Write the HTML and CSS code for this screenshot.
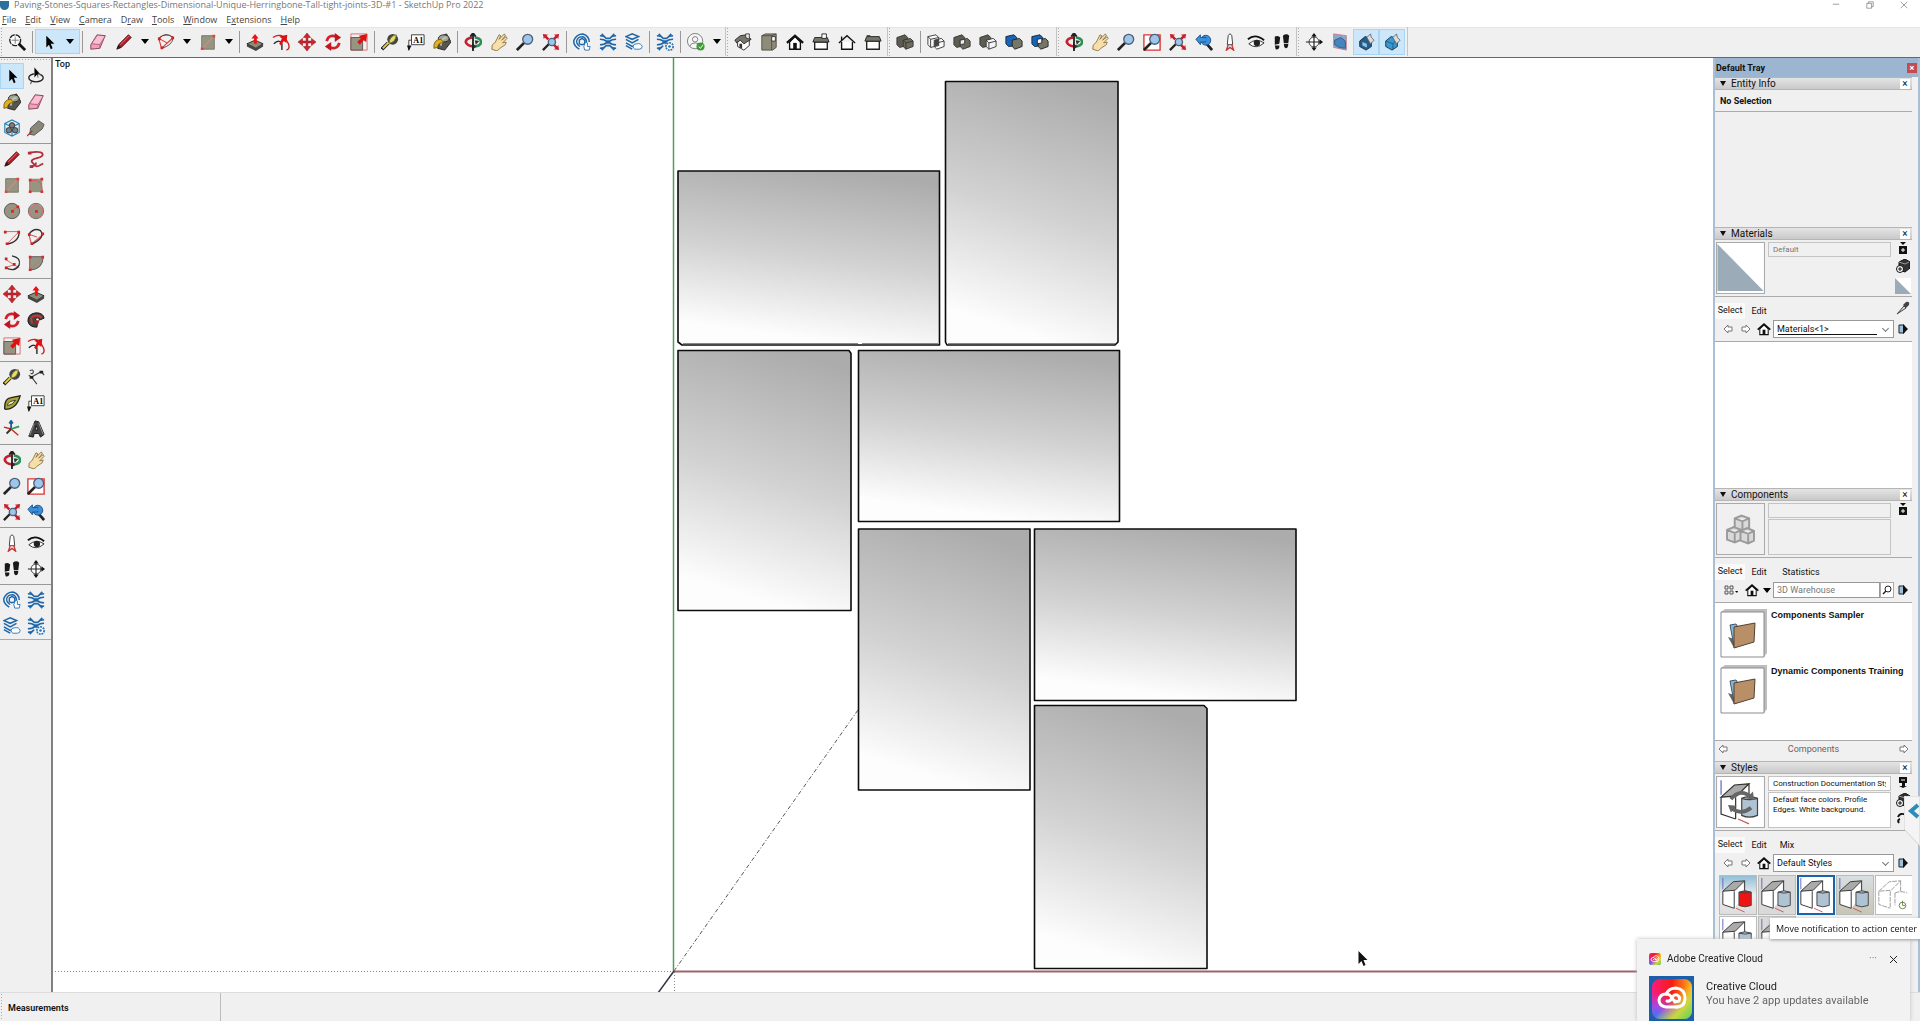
FILE: index.html
```html
<!DOCTYPE html>
<html lang="en">
<head>
<meta charset="utf-8">
<title>Paving-Stones - SketchUp Pro 2022</title>
<link rel="stylesheet" href="styles.css">
</head>
<body>
<svg class="sprite" aria-hidden="true">
  <defs>
    <linearGradient id="stone" x1="0.62" y1="0" x2="0.42" y2="1"><stop offset="0" stop-color="#acacac"/><stop offset="0.5" stop-color="#d2d2d2"/><stop offset="0.95" stop-color="#fdfdfd"/></linearGradient>
    <linearGradient id="ccH" x1="0" y1="0" x2="1" y2="0"><stop offset="0" stop-color="#f81b7c"/><stop offset="0.5" stop-color="#f71d12"/><stop offset="1" stop-color="#ffb21c"/></linearGradient>
    <linearGradient id="ccV" x1="0.5" y1="0" x2="0.2" y2="1"><stop offset="0.4" stop-color="#c83bd0" stop-opacity="0"/><stop offset="0.75" stop-color="#a04be8"/><stop offset="1" stop-color="#2e7df0"/></linearGradient>
    <linearGradient id="ccG" x1="0" y1="0" x2="1" y2="1"><stop offset="0.5" stop-color="#e8e040" stop-opacity="0"/><stop offset="0.75" stop-color="#c8d840"/><stop offset="1" stop-color="#5ad05c"/></linearGradient>
  </defs>
  <symbol id="search" viewBox="0 0 20 20"><circle cx="8" cy="8" r="6" fill="#fff" stroke="#222" stroke-width="1.5" stroke-dasharray="6 1"/><path d="M8 4v8M4 8h8" stroke="#777"/><path d="M12 12l7 7" stroke="#111" stroke-width="3"/></symbol>
  <symbol id="cursor" viewBox="0 0 20 20"><path d="M7 3v13l3-3 2 5 2-1-2-5h4z" fill="#000"/></symbol>
  <symbol id="lasso" viewBox="0 0 20 20"><ellipse cx="10" cy="12" rx="8" ry="4.500" fill="none" stroke="#222" stroke-width="1.500"/><path d="M5 16l-1 3" stroke="#222"/><path d="M8 0v12l3-3 1 3h1l-1-4h3z" fill="#000" stroke="#f0f0f0" stroke-width=".5"/></symbol>
  <symbol id="eraser" viewBox="0 0 20 20"><path d="M9 2l9 1-6 14-10 1v-5z" fill="#f0a0b8" stroke="#7a3c50"/><path d="M9 2L3 12l9 1 6-10M12 13v4" fill="none" stroke="#b86080"/><path d="M10 3l7 1-5 8-8-1z" fill="#f8c0d0"/></symbol>
  <symbol id="pencil" viewBox="0 0 20 20"><path d="M2 18l2-5L15 2l3 3L7 16z" fill="#b81c28" stroke="#4c1014"/><path d="M2 18l2-5 3 3z" fill="#222"/><path d="M6 13L16 3" stroke="#e67"/></symbol>
  <symbol id="arc" viewBox="0 0 20 20"><path d="M5 17L2 6Q9-1 18 5L5 17M2 6l9 5" fill="none" stroke="#d33" stroke-width="1.200"/><path d="M2 6Q10-2 18 5 17 14 5 17" fill="none" stroke="#444"/><path d="M1 5h3v3H1zM16 4h3v3h-3zM4 15h3v3H4z" fill="#c22"/></symbol>
  <symbol id="rect" viewBox="0 0 20 20"><path d="M3 3h14v15H3z" fill="#989482" stroke="#77745f"/><path d="M3 18L17 3" stroke="#e88"/><path d="M2 16h3v3H2zM15 2h3v3h-3z" fill="#d44"/></symbol>
  <symbol id="rrect" viewBox="0 0 20 20"><path d="M3 3h14v15H3z" fill="#989482"/><path d="M3 18V5h8q6 2 6 13" fill="none" stroke="#d55"/><path d="M2 3h3v3H2zM2 16h3v3H2zM15 16h3v3h-3zM15 2h3v3h-3z" fill="#c33"/></symbol>
  <symbol id="circle" viewBox="0 0 20 20"><circle cx="10" cy="10" r="8.500" fill="#989482" stroke="#555"/><path d="M10 10l6-5" stroke="#d55"/><path d="M9 9h3v3H9zM15 4h3v3h-3z" fill="#d22"/></symbol>
  <symbol id="poly" viewBox="0 0 20 20"><circle cx="10" cy="10" r="8.500" fill="#b4aa9c" stroke="#666"/><path d="M10 2l8 6-3 9H5L2 8z" fill="#989482" stroke="#d66"/><path d="M9 9h3v3H9z" fill="#d22"/></symbol>
  <symbol id="arc2" viewBox="0 0 20 20"><path d="M2 4h16L4 18" fill="none" stroke="#d55"/><path d="M18 4q0 12-14 14" fill="none" stroke="#333" stroke-width="1.500"/><path d="M1 3h3v3H1zM16 3h3v3h-3zM3 16h3v3H3z" fill="#c22"/></symbol>
  <symbol id="arc3" viewBox="0 0 20 20"><path d="M5 18L2 7l9 3M5 18L18 7" fill="none" stroke="#d55" stroke-width="1.300"/><path d="M2 7Q8-1 15 3q6 8-10 15" fill="none" stroke="#333" stroke-width="1.500"/><path d="M1 6h3v3H1zM16 5h3v3h-3zM4 16h3v3H4z" fill="#c22"/></symbol>
  <symbol id="arc4" viewBox="0 0 20 20"><path d="M3 6l9 6 6 3M12 12l-9 3" fill="none" stroke="#d55"/><path d="M10 2q10 2 8 10-5 9-15 3" fill="none" stroke="#333" stroke-width="1.500"/><path d="M2 4h3v3H2zM11 10h3v3h-3zM2 14h3v3H2z" fill="#c22"/></symbol>
  <symbol id="pie" viewBox="0 0 20 20"><path d="M3 3h15q0 14-15 15z" fill="#989482" stroke="#555"/><path d="M3 18L17 4M3 3v15" stroke="#d66"/><path d="M2 2h3v3H2zM2 16h3v3H2zM16 2h3v3h-3z" fill="#c33"/></symbol>
  <symbol id="free" viewBox="0 0 20 20"><path d="M3 3q12-2 14 1t-6 5-5 5 4 4 8-3" fill="none" stroke="#b22e38" stroke-width="2"/><path d="M1 2h4v3H1zM3 17h4v3H3z" fill="#b22e38"/><path d="M5 18q5 0 5-4" fill="none" stroke="#b22e38" stroke-width="2"/></symbol>
  <symbol id="push" viewBox="0 0 20 20"><path d="M1 12l9-4 9 4-8 5z" fill="#8c8a74" stroke="#222"/><path d="M1 12v3l10 5 8-5v-3l-8 5z" fill="#444"/><path d="M10 1l4 5h-2v6H9V6H6z" fill="#e11"/></symbol>
  <symbol id="offset" viewBox="0 0 20 20"><path d="M1 5q9-6 15 3t0 11" fill="none" stroke="#c22" stroke-width="1.500"/><path d="M2 12q6-6 9 0v7" fill="none" stroke="#222" stroke-width="1.500"/><path d="M8 12l3-6-3-2 9-2-1 9-3-2-3 5z" fill="#d11"/></symbol>
  <symbol id="move" viewBox="0 0 20 20"><path d="M10 0l4 5h-3v4h4V6l5 4-5 4v-3h-4v4h3l-4 5-4-5h3v-4H5v3l-5-4 5-4v3h4V5H6z" fill="#d2222c" stroke="#8e1720" stroke-width=".6"/></symbol>
  <symbol id="rotate" viewBox="0 0 20 20"><path d="M3 9q2-8 11-5M17 11q-2 8-11 5" fill="none" stroke="#d2222c" stroke-width="3"/><path d="M12 0l7 5-7 5zM8 10l-7 5 7 5z" fill="#c01620"/></symbol>
  <symbol id="scale" viewBox="0 0 20 20"><path d="M1 1h18v18H1z" fill="none" stroke="#d66"/><path d="M1 5h13v14H1z" fill="#989482" stroke="#555"/><path d="M8 10l4-4-2-3 9-2-1 9-3-2-4 5z" fill="#d11"/></symbol>
  <symbol id="follow" viewBox="0 0 20 20"><path d="M1 11q0-8 9-9 8 0 9 6l-5 2q-1-4-4-2-2 2 2 4l-1 6Q2 18 1 11" fill="#444" stroke="#111"/><path d="M6 14Q2 6 10 5q5 0 6 3" fill="none" stroke="#c33" stroke-width="2"/><path d="M8 11l6-1-2 6z" fill="#a22"/></symbol>
  <symbol id="tape" viewBox="0 0 20 20"><path d="M1 18l7-7" stroke="#222" stroke-width="4"/><path d="M2 17l7-7" stroke="#e0d040" stroke-width="2"/><circle cx="13" cy="7" r="6" fill="#444"/><path d="M9 11q1-8 8-9-1 9-8 9" fill="#e6e05c" stroke="#774"/></symbol>
  <symbol id="text" viewBox="0 0 20 20"><path d="M5 2h14v11H5zM2 19V8h3" fill="#fff" stroke="#333"/><path d="M0 14h5l-3 6z" fill="#111"/><text x="7" y="11" font-family="Liberation Serif,serif" font-size="9" font-weight="bold">A1</text></symbol>
  <symbol id="paint" viewBox="0 0 20 20"><path d="M7 5l8-4 5 9-7 9-8-2z" fill="#55574d" stroke="#222"/><ellipse cx="12" cy="6" rx="6" ry="4" fill="#a1a392" stroke="#222"/><path d="M9 14q-1-8 6-9" fill="none" stroke="#bfc1b4" stroke-width="2"/><path d="M1 17Q0 7 9 7l3 4q-6-1-7 5z" fill="#e0b020" stroke="#765b10"/></symbol>
  <symbol id="orbit" viewBox="0 0 20 20"><path d="M12 5q7 1 7 5t-7 5" fill="none" stroke="#2c8f55" stroke-width="3"/><path d="M9 5q-7 1-7 5 1 4 8 5" fill="none" stroke="#c32030" stroke-width="3"/><path d="M9 11l5 4-5 4zM12 8l5 1-4 4z" fill="#333"/><path d="M10 1v19M7 4l3-4 3 4" fill="none" stroke="#222" stroke-width="2"/></symbol>
  <symbol id="hand" viewBox="0 0 20 20"><path d="M2 18q-1-5 4-8l4-8 2 1-2 4 6-6 1 2-4 5 5-4 1 2-5 5 4-1-1 3-6 4-3 3z" fill="#f6dfa8" stroke="#8b7345"/></symbol>
  <symbol id="zoom" viewBox="0 0 20 20"><path d="M1 19l8-8" stroke="#222" stroke-width="3"/><circle cx="13" cy="7" r="5.500" fill="#9fc6ea" stroke="#4a6078" stroke-width="1.500"/></symbol>
  <symbol id="zoomwin" viewBox="0 0 20 20"><path d="M1 2h18v17H1z" fill="#fff" stroke="#d33" stroke-width="1.500"/><path d="M1 19l8-8" stroke="#222" stroke-width="3"/><circle cx="13" cy="7" r="5.500" fill="#9fc6ea" stroke="#4a6078" stroke-width="1.500"/></symbol>
  <symbol id="zoomext" viewBox="0 0 20 20"><path d="M1 1l6 1-2 1 3 3-2 2-3-3-1 2zM19 1l-1 6-1-2-3 3-2-2 3-3-2-1zM19 19l-6-1 2-1-3-3 2-2 3 3 1-2z" fill="#c81c28"/><path d="M1 19l7-7" stroke="#222" stroke-width="2.500"/><circle cx="11" cy="10" r="4" fill="#9fc6ea" stroke="#4a6078" stroke-width="1.500"/></symbol>
  <symbol id="zoomprev" viewBox="0 0 20 20"><path d="M12 11l7 8" stroke="#222" stroke-width="3"/><circle cx="12" cy="8" r="5.500" fill="#3b8fd8" stroke="#1c4f85"/><path d="M1 7l5-5v3h6v5H6v3z" fill="#3b8fd8" stroke="#1c4f85"/><path d="M6 6h7v3H6z" fill="#3b8fd8"/></symbol>
  <symbol id="ware" viewBox="0 0 20 20"><path d="M7 18Q0 14 1 8 4 1 11 1q7 2 7 9" fill="none" stroke="#1e66a8" stroke-width="1.700"/><path d="M8 15q-4-2-4-6 1-5 7-5 4 2 4 6M7 12V8l3-2 3 2v4l-3 1z" fill="none" stroke="#1e66a8" stroke-width="1.500"/><path d="M12 15l2-5 2 1v4h3l-1 4h-5z" fill="#fff" stroke="#2874b5"/></symbol>
  <symbol id="exten" viewBox="0 0 20 20"><path d="M1 3q5 0 7 3h4q2-3 7-3M1 7q5 0 7 2h4q2-2 7-2M1 17q5 0 7-3h4q2 3 7 3M1 13q5 0 7-2h4q2 2 7 2M3 1l4 4M17 1l-4 4M3 19l4-4M17 19l-4-4" fill="none" stroke="#1e66a8" stroke-width="1.800"/></symbol>
  <symbol id="layers" viewBox="0 0 20 20"><path d="M1 4l7-3 7 3-7 3zM1 7l7 4 7-4M1 11l7 4 3-1M1 14l7 4" fill="none" stroke="#1e66a8" stroke-width="1.700"/><path d="M9 15q0-3 4-3 5-1 6 3 0 3-3 3h-5q-2-1-2-3" fill="#fff" stroke="#2874b5"/></symbol>
  <symbol id="extgear" viewBox="0 0 20 20"><path d="M1 3q5 0 7 3h4q2-3 7-3M1 7q5 0 7 2h4q2-2 7-2M1 17q5 0 7-3M1 13q5 0 7-2h4M3 1l4 4M17 1l-4 4M3 19l4-4" fill="none" stroke="#1e66a8" stroke-width="1.800"/><circle cx="15" cy="15" r="4" fill="#fff" stroke="#2874b5" stroke-dasharray="2 1" stroke-width="2"/><circle cx="15" cy="15" r="1.500" fill="#2874b5"/></symbol>
  <symbol id="user" viewBox="0 0 20 20"><circle cx="9" cy="9" r="8.500" fill="#f6f6f6" stroke="#777"/><circle cx="9" cy="7" r="3" fill="none" stroke="#777"/><path d="M3 15q1-4 6-4t6 4" fill="none" stroke="#777"/><circle cx="15" cy="15" r="4.500" fill="#3c9b35"/><path d="M13 15l2 2 3-4" fill="none" stroke="#fff"/></symbol>
  <symbol id="iso" viewBox="0 0 20 20"><path d="M4 9v6l7 4 6-5V7" fill="#fff" stroke="#222"/><path d="M1 8l6-5 7-1 5 5-8 5-4-4-4 3z" fill="#77756a" stroke="#222"/><path d="M13 1h4v6l-4-2z" fill="#eee" stroke="#333"/><path d="M6 12h3v5l-3-1z" fill="#333"/></symbol>
  <symbol id="top" viewBox="0 0 20 20"><path d="M2 3l4-2h12v15l-4 3H2z" fill="#8e8b7a" stroke="#4f4d42"/><path d="M2 3h11v16M13 3l5-2" fill="none" stroke="#4f4d42"/><path d="M13 4h4v5h-4z" fill="#fff" stroke="#333"/></symbol>
  <symbol id="home" viewBox="0 0 20 20"><path d="M4 10v8h12v-8l-6-6z" fill="#fff" stroke="#111" stroke-width="1.500"/><path d="M1 11l9-8 9 8" fill="none" stroke="#111" stroke-width="2.500"/><path d="M8 11h4v7H8z" fill="#111"/></symbol>
  <symbol id="right" viewBox="0 0 20 20"><path d="M3 10h14v8H3z" fill="#fff" stroke="#222" stroke-width="1.500"/><path d="M3 5h14l2 5H1z" fill="#77756a" stroke="#222"/><path d="M11 1h5v5h-5z" fill="#fff" stroke="#222"/></symbol>
  <symbol id="back" viewBox="0 0 20 20"><path d="M4 10v8h12v-8" fill="#fff" stroke="#111" stroke-width="1.500"/><path d="M1 11l9-8 9 8M4 8V4" fill="none" stroke="#111" stroke-width="1.500"/></symbol>
  <symbol id="left" viewBox="0 0 20 20"><path d="M3 9h14v9H3z" fill="#fff" stroke="#222" stroke-width="1.500"/><path d="M3 4h14l2 5H1zM3 3h4" fill="#77756a" stroke="#222"/></symbol>
  <symbol id="solid" viewBox="0 0 20 20"><path d="M1 5l9-3 3 3v9l-9 2-3-3z" fill="#5d5c52" stroke="#333"/><path d="M8 8l8-2 3 3v6l-8 3-3-3z" fill="#6d6b5e" stroke="#333"/><path d="M8 8l3 3 8-2M11 11v7" fill="none" stroke="#333"/></symbol>
  <symbol id="inter" viewBox="0 0 20 20"><path d="M1 4l9-2 3 3v9l-9 2-3-3zM1 4l3 3v9M8 8l8-2 3 3v6l-8 3-3-3zM11 11l8-2M4 7l9-2" fill="#fff" fill-opacity=".6" stroke="#333"/><path d="M8 8l5-1v7l-5 1z" fill="#444"/></symbol>
  <symbol id="union" viewBox="0 0 20 20"><path d="M1 5l9-3 3 3v9l-9 2-3-3z" fill="#5d5c52" stroke="#333"/><path d="M8 8l8-2 3 3v6l-8 3-3-3z" fill="#6d6b5e" stroke="#333"/><path d="M8 8l5-1v5l-5 1z" fill="#eee" stroke="#333"/></symbol>
  <symbol id="subtr" viewBox="0 0 20 20"><path d="M1 5l9-3 3 3v9l-9 2-3-3z" fill="#5d5c52" stroke="#333"/><path d="M8 8l8-2 3 3v6l-8 3-3-3z" fill="#f4f4f4" stroke="#333"/><path d="M8 8l3 3 8-2M11 11v7" fill="none" stroke="#333"/></symbol>
  <symbol id="trim" viewBox="0 0 20 20"><path d="M1 4l9-2 3 3v9l-9 1-3-3z" fill="#1b63b5" stroke="#123"/><path d="M8 8l8-2 3 3v6l-8 3-3-3z" fill="#77756a" stroke="#222"/></symbol>
  <symbol id="cleave" viewBox="0 0 20 20"><path d="M1 4l9-2 3 3v9l-9 1-3-3z" fill="#1b63b5" stroke="#123"/><path d="M8 8l8-2 3 3v6l-8 3-3-3z" fill="#77756a" stroke="#222"/><path d="M7 7l5-1v5l-5 1z" fill="#fff" stroke="#123"/></symbol>
  <symbol id="pos" viewBox="0 0 20 20"><path d="M8 3q2-4 4 0l1 10H7z" fill="#fff" stroke="#333"/><path d="M8 13l-2 6 4-3 4 3-2-6" fill="none" stroke="#c33" stroke-width="1.500"/></symbol>
  <symbol id="eye" viewBox="0 0 20 20"><path d="M1 7q8-7 18 1" fill="none" stroke="#111" stroke-width="2"/><path d="M2 12q8-7 17-1-9 8-17 1" fill="#fff" stroke="#222"/><circle cx="11" cy="11" r="3.500" fill="#222"/></symbol>
  <symbol id="walk" viewBox="0 0 20 20"><path d="M2 4q4-2 6 1l-1 7-5 1zM2 14h5v2q-1 3-4 2zM11 3q4-3 7 0l-1 8h-5zM12 12h5q0 5-3 5-2-1-2-5" fill="#181818"/></symbol>
  <symbol id="section" viewBox="0 0 20 20"><circle cx="10" cy="10" r="5.500" fill="#fff" stroke="#333"/><path d="M1 10h18M10 3v14" fill="none" stroke="#222" stroke-width="1.300"/><path d="M7 4l3-4 3 4zM7 16l3 4 3-4zM16 7l4 3-4 3z" fill="#111"/></symbol>
  <symbol id="plane" viewBox="0 0 20 20"><path d="M3 1l14 2v16L3 16z" fill="#87a8cf" stroke="#c67a88"/><path d="M4 8l7-3 5 4v8l-7-1-5-3z" fill="#4684bd" stroke="#345d87"/></symbol>
  <symbol id="cut" viewBox="0 0 20 20"><path d="M3 9l6-5 7 2v9l-6 4-7-4z" fill="#275b88" stroke="#183247"/><path d="M6 10l5 2v4l-5-2z" fill="#8cc4e4"/><path d="M11 5l4-4 1 4 3 3-4 4z" fill="#ddd" stroke="#666"/></symbol>
  <symbol id="fill" viewBox="0 0 20 20"><path d="M3 9l6-5 7 2v9l-6 4-7-4z" fill="#3a98d0" stroke="#183247"/><path d="M3 9l8 3 4-4M11 12v7" fill="none" stroke="#1c5c85"/><path d="M11 5l4-4 1 4 3 3-4 4z" fill="#ddd" stroke="#666"/></symbol>
  <symbol id="group" viewBox="0 0 20 20"><path d="M2 5l8-4 8 4v10l-8 4-8-4zM2 5l8 4 8-4M10 9v10" fill="none" stroke="#2781b8" stroke-width="1.300"/><g fill="#777d81" stroke="#333"><circle cx="10" cy="7" r="3"/><circle cx="6.500" cy="12.500" r="3"/><circle cx="13.500" cy="12.500" r="3"/></g></symbol>
  <symbol id="tag" viewBox="0 0 20 20"><path d="M3 17l1-7 9-8 6 4-2 5-9 7z" fill="#8b8878" stroke="#555"/><path d="M0 19l6-6" stroke="#a33" stroke-width="1.500"/></symbol>
  <symbol id="dim" viewBox="0 0 20 20"><path d="M3 3q4-2 4 1T4 6M5 10l11-6M5 10l6 8M16 4l3 4M2 8l3 2" fill="none" stroke="#444" stroke-width="1.300"/><path d="M3 9h4v3H3zM14 3h4v3h-4z" fill="#222"/></symbol>
  <symbol id="prot" viewBox="0 0 20 20"><path d="M2 17Q1 5 9 4l10-2q-4 15-17 15" fill="#a8a438" stroke="#222" stroke-width="1.500"/><path d="M5 13q0-5 9-6-3 5-9 6" fill="#f3f0c0" stroke="#333"/></symbol>
  <symbol id="axes" viewBox="0 0 20 20"><path d="M9 10V1M7 4l2-3 2 3" fill="none" stroke="#1d5c96" stroke-width="2"/><path d="M9 10l8 7M1 8l8 2" stroke="#c22" stroke-width="1.500"/><path d="M9 10l9-3" stroke="#2a9a50" stroke-width="2"/><path d="M4 15l5-5" stroke="#333" stroke-width="2"/></symbol>
  <symbol id="text3d" viewBox="0 0 20 20"><path d="M2 18L9 1l4 1 6 14-4 3-2-4H8l-1 4zM9 11h3l-2-5z" fill="#444" stroke="#111"/><path d="M13 3l5 13M3 17l5-13" stroke="#999"/></symbol>
  <symbol id="prev" viewBox="0 0 10 10"><path d="M1 5l4-4v2h4v4H5v2z" fill="#fff" stroke="#777"/></symbol>
  <symbol id="next" viewBox="0 0 10 10"><path d="M9 5L5 1v2H1v4h4v2z" fill="#fff" stroke="#777"/></symbol>
  <symbol id="detail" viewBox="0 0 10 10"><path d="M1 1h5v8H1z" fill="#9cc0dc" stroke="#222"/><path d="M5 0l5 5-5 5z" fill="#111"/></symbol>
  <symbol id="pane" viewBox="0 0 10 12"><path d="M2 0h6L5 3zM1 4h8v8H1z" fill="#111"/><path d="M5 6v4M3 8h4" stroke="#fff"/></symbol>
  <symbol id="block" viewBox="0 0 14 14"><path d="M3 3l6-3 5 3v6l-5 4-6-2z" fill="#333" stroke="#111"/><path d="M3 3l6 2 4-2" fill="none" stroke="#999"/><circle cx="4" cy="10" r="3.500" fill="#fff" stroke="#111"/><path d="M4 8v4M2 10h4" stroke="#111"/></symbol>
  <symbol id="dropper" viewBox="0 0 14 14"><path d="M1 13l7-8 2 2z" fill="#ddd" stroke="#444"/><path d="M7 4l3-3q4-1 3 3l-3 3z" fill="#444"/></symbol>
  <symbol id="lens" viewBox="0 0 10 10"><circle cx="6" cy="4" r="3" fill="none" stroke="#222"/><path d="M4 6L1 9" stroke="#222" stroke-width="1.500"/></symbol>
  <symbol id="folder" viewBox="0 0 48 50"><path d="M1 4l4-3h42v44l-3 4z" fill="#bdbdbd"/><path d="M1 4h43v45H1z" fill="#fff" stroke="#8b8b8b"/><path d="M8 29l6 2v9z" fill="#666"/><path d="M10 17l6-1 2 3h8v12l-12 7z" fill="#83b8d4" stroke="#456"/><path d="M14 19l21-4-1 19-20 6z" fill="#b98f68" stroke="#4f4235"/></symbol>
  <symbol id="cubes" viewBox="0 0 48 52"><g fill="#d9d9d9" stroke="#9a9a9a" stroke-width="2"><path d="M18 15l7-3 8 3v10l-7 3-8-3zM18 15l8 3 7-3M26 18v10"/><path d="M10 27l7-3 8 3v10l-7 3-8-3zM10 27l8 3 7-3M18 30v10"/><path d="M24 28l7-3 7 3v10l-6 3-8-3zM24 28l8 3 6-3M32 31v10"/></g></symbol>
  <symbol id="model" viewBox="0 0 38 38"><path d="M3 15L14 5l11-1v18L15 33 3 29z" fill="#fff"/><path d="M3 15L14 5l12-1-10 10z" fill="#aaa"/><path d="M3 15L14 5l12-1-10 10zM3 15v14l12 4M15 15v18M26 4v12" fill="none" stroke="#333"/><path d="M20 16q6-3 13 0v14q-7 3-13 0z" fill="currentColor" stroke="#444"/><path d="M20 16q6 2 13 0" fill="none" stroke="#444"/><path d="M3 1v12" stroke="#66b"/><path d="M17 33l9 4" stroke="#c55"/></symbol>
  <symbol id="cc" viewBox="0 0 40 40"><rect width="40" height="40" rx="8" fill="url(#ccH)"/><rect width="40" height="40" rx="8" fill="url(#ccV)"/><rect width="40" height="40" rx="8" fill="url(#ccG)"/><g fill="none" stroke="#fff" stroke-width="3" stroke-linecap="round"><path d="M26 28H14q-7-1-7-7 1-6 7-6 4 0 6 4l3 4"/><path d="M14 15q3-6 10-6 9 1 9 10t-9 9"/><path d="M15 22q3 1 5-3 2-4 5-3 4 2 2 6-2 1-4 0"/></g></symbol>
</svg>

<header class="titlebar">
  <span class="app-dot"></span>
  <h1 class="title">Paving-Stones-Squares-Rectangles-Dimensional-Unique-Herringbone-Tall-tight-joints-3D-#1 - SketchUp Pro 2022</h1>
  <div class="window-buttons">
    <button aria-label="Minimize"><svg viewBox="0 0 10 10"><path d="M1 4h8" stroke="#888"/></svg></button>
    <button aria-label="Restore"><svg viewBox="0 0 10 10"><path d="M1 3h6v6H1zM3 3V1h6v6H7" fill="none" stroke="#888"/></svg></button>
    <button aria-label="Close"><svg viewBox="0 0 10 10"><path d="M1 1l8 8M9 1L1 9" stroke="#888"/></svg></button>
  </div>
</header>
<nav class="menubar">
  <button><u>F</u>ile</button><button><u>E</u>dit</button><button><u>V</u>iew</button><button><u>C</u>amera</button><button>D<u>r</u>aw</button><button><u>T</u>ools</button><button><u>W</u>indow</button><button>E<u>x</u>tensions</button><button><u>H</u>elp</button>
</nav>
<div class="toolbars">
  <div class="toolbar">
    <button class="tool" aria-label="Search"><svg><use href="#search"/></svg></button><i class="sep"></i>
    <span class="split"><button class="tool" aria-label="Select"><svg><use href="#cursor"/></svg></button><button class="drop" aria-label="Select tools"></button></span><i class="sep"></i>
    <button class="tool" aria-label="Eraser"><svg><use href="#eraser"/></svg></button>
    <button class="tool" aria-label="Line"><svg><use href="#pencil"/></svg></button><button class="drop" aria-label="Line tools"></button>
    <button class="tool" aria-label="Arc"><svg><use href="#arc"/></svg></button><button class="drop" aria-label="Arc tools"></button>
    <button class="tool" aria-label="Rectangle"><svg><use href="#rect"/></svg></button><button class="drop" aria-label="Shape tools"></button><i class="sep"></i>
    <button class="tool" aria-label="Push/Pull"><svg><use href="#push"/></svg></button>
    <button class="tool" aria-label="Offset"><svg><use href="#offset"/></svg></button>
    <button class="tool" aria-label="Move"><svg><use href="#move"/></svg></button>
    <button class="tool" aria-label="Rotate"><svg><use href="#rotate"/></svg></button>
    <button class="tool" aria-label="Scale"><svg><use href="#scale"/></svg></button><i class="sep"></i>
    <button class="tool" aria-label="Tape Measure"><svg><use href="#tape"/></svg></button>
    <button class="tool" aria-label="Text"><svg><use href="#text"/></svg></button>
    <button class="tool" aria-label="Paint Bucket"><svg><use href="#paint"/></svg></button><i class="sep"></i>
    <button class="tool" aria-label="Orbit"><svg><use href="#orbit"/></svg></button>
    <button class="tool" aria-label="Pan"><svg><use href="#hand"/></svg></button>
    <button class="tool" aria-label="Zoom"><svg><use href="#zoom"/></svg></button>
    <button class="tool" aria-label="Zoom Extents"><svg><use href="#zoomext"/></svg></button><i class="sep"></i>
    <button class="tool" aria-label="3D Warehouse"><svg><use href="#ware"/></svg></button>
    <button class="tool" aria-label="Extension Warehouse"><svg><use href="#exten"/></svg></button>
    <button class="tool" aria-label="Send to LayOut"><svg><use href="#layers"/></svg></button><i class="sep"></i>
    <button class="tool" aria-label="Extension Manager"><svg><use href="#extgear"/></svg></button><i class="sep"></i>
    <button class="tool" aria-label="Account"><svg><use href="#user"/></svg></button><button class="drop" aria-label="Account menu"></button>
  </div>
  <div class="toolbar views">
    <button class="tool" aria-label="Iso"><svg><use href="#iso"/></svg></button>
    <button class="tool" aria-label="Top view"><svg><use href="#top"/></svg></button>
    <button class="tool" aria-label="Front"><svg><use href="#home"/></svg></button>
    <button class="tool" aria-label="Right"><svg><use href="#right"/></svg></button>
    <button class="tool" aria-label="Back"><svg><use href="#back"/></svg></button>
    <button class="tool" aria-label="Left"><svg><use href="#left"/></svg></button>
  </div>
  <div class="toolbar solids">
    <button class="tool" aria-label="Outer Shell"><svg><use href="#solid"/></svg></button><i class="sep"></i>
    <button class="tool" aria-label="Intersect"><svg><use href="#inter"/></svg></button>
    <button class="tool" aria-label="Union"><svg><use href="#union"/></svg></button>
    <button class="tool" aria-label="Subtract"><svg><use href="#subtr"/></svg></button>
    <button class="tool" aria-label="Trim"><svg><use href="#trim"/></svg></button>
    <button class="tool" aria-label="Split"><svg><use href="#cleave"/></svg></button>
  </div>
  <div class="toolbar camera">
    <button class="tool" aria-label="Orbit"><svg><use href="#orbit"/></svg></button>
    <button class="tool" aria-label="Pan"><svg><use href="#hand"/></svg></button>
    <button class="tool" aria-label="Zoom"><svg><use href="#zoom"/></svg></button>
    <button class="tool" aria-label="Zoom Window"><svg><use href="#zoomwin"/></svg></button>
    <button class="tool" aria-label="Zoom Extents"><svg><use href="#zoomext"/></svg></button>
    <button class="tool" aria-label="Previous"><svg><use href="#zoomprev"/></svg></button>
    <button class="tool" aria-label="Position Camera"><svg><use href="#pos"/></svg></button>
    <button class="tool" aria-label="Look Around"><svg><use href="#eye"/></svg></button>
    <button class="tool" aria-label="Walk"><svg><use href="#walk"/></svg></button>
  </div>
  <div class="toolbar sections">
    <button class="tool" aria-label="Section Plane"><svg><use href="#section"/></svg></button>
    <button class="tool" aria-label="Display Section Planes"><svg><use href="#plane"/></svg></button>
    <button class="tool on" aria-label="Display Section Cuts"><svg><use href="#cut"/></svg></button>
    <button class="tool on" aria-label="Display Section Fill"><svg><use href="#fill"/></svg></button>
  </div>
</div>

<main class="workspace">
  <aside class="palette">
    <div class="tools">
      <button class="tool on" aria-label="Select"><svg><use href="#cursor"/></svg></button><button class="tool" aria-label="Lasso"><svg><use href="#lasso"/></svg></button>
      <button class="tool" aria-label="Paint Bucket"><svg><use href="#paint"/></svg></button><button class="tool" aria-label="Eraser"><svg><use href="#eraser"/></svg></button>
      <button class="tool" aria-label="Make Component"><svg><use href="#group"/></svg></button><button class="tool" aria-label="Tag"><svg><use href="#tag"/></svg></button>
      <i class="rule"></i>
      <button class="tool" aria-label="Line"><svg><use href="#pencil"/></svg></button><button class="tool" aria-label="Freehand"><svg><use href="#free"/></svg></button>
      <button class="tool" aria-label="Rectangle"><svg><use href="#rect"/></svg></button><button class="tool" aria-label="Rotated Rectangle"><svg><use href="#rrect"/></svg></button>
      <button class="tool" aria-label="Circle"><svg><use href="#circle"/></svg></button><button class="tool" aria-label="Polygon"><svg><use href="#poly"/></svg></button>
      <button class="tool" aria-label="Arc"><svg><use href="#arc2"/></svg></button><button class="tool" aria-label="2 Point Arc"><svg><use href="#arc3"/></svg></button>
      <button class="tool" aria-label="3 Point Arc"><svg><use href="#arc4"/></svg></button><button class="tool" aria-label="Pie"><svg><use href="#pie"/></svg></button>
      <i class="rule"></i>
      <button class="tool" aria-label="Move"><svg><use href="#move"/></svg></button><button class="tool" aria-label="Push/Pull"><svg><use href="#push"/></svg></button>
      <button class="tool" aria-label="Rotate"><svg><use href="#rotate"/></svg></button><button class="tool" aria-label="Follow Me"><svg><use href="#follow"/></svg></button>
      <button class="tool" aria-label="Scale"><svg><use href="#scale"/></svg></button><button class="tool" aria-label="Offset"><svg><use href="#offset"/></svg></button>
      <i class="rule"></i>
      <button class="tool" aria-label="Tape Measure"><svg><use href="#tape"/></svg></button><button class="tool" aria-label="Dimension"><svg><use href="#dim"/></svg></button>
      <button class="tool" aria-label="Protractor"><svg><use href="#prot"/></svg></button><button class="tool" aria-label="Text"><svg><use href="#text"/></svg></button>
      <button class="tool" aria-label="Axes"><svg><use href="#axes"/></svg></button><button class="tool" aria-label="3D Text"><svg><use href="#text3d"/></svg></button>
      <i class="rule"></i>
      <button class="tool" aria-label="Orbit"><svg><use href="#orbit"/></svg></button><button class="tool" aria-label="Pan"><svg><use href="#hand"/></svg></button>
      <button class="tool" aria-label="Zoom"><svg><use href="#zoom"/></svg></button><button class="tool" aria-label="Zoom Window"><svg><use href="#zoomwin"/></svg></button>
      <button class="tool" aria-label="Zoom Extents"><svg><use href="#zoomext"/></svg></button><button class="tool" aria-label="Previous"><svg><use href="#zoomprev"/></svg></button>
      <i class="rule"></i>
      <button class="tool" aria-label="Position Camera"><svg><use href="#pos"/></svg></button><button class="tool" aria-label="Look Around"><svg><use href="#eye"/></svg></button>
      <button class="tool" aria-label="Walk"><svg><use href="#walk"/></svg></button><button class="tool" aria-label="Section Plane"><svg><use href="#section"/></svg></button>
      <i class="rule"></i>
      <button class="tool" aria-label="3D Warehouse"><svg><use href="#ware"/></svg></button><button class="tool" aria-label="Extension Warehouse"><svg><use href="#exten"/></svg></button>
      <button class="tool" aria-label="Send to LayOut"><svg><use href="#layers"/></svg></button><button class="tool" aria-label="Extension Manager"><svg><use href="#extgear"/></svg></button>
    </div>
  </aside>

  <section class="viewport" aria-label="Model view">
    <span class="view-name">Top</span>
    <svg class="scene">
      <g transform="translate(-53 -58)">
        <path d="M52 971.500H673M674.500 972v60" stroke="#888" stroke-dasharray="1 2" fill="none"/>
        <path d="M674 971L858 710" stroke="#555" stroke-dasharray="4 2 1 2" fill="none"/>
        <path d="M673.500 58V971" stroke="#559a5b" stroke-width="1.500"/>
        <path d="M674 971.500H4000" stroke="#a06468" stroke-width="2"/>
        <path d="M674 971l-16 22" stroke="#334" stroke-width="1.500"/>
        <g fill="url(#stone)" stroke="#0c0c0c" stroke-width="1.600" stroke-linejoin="round">
          <path d="M678 171H939.500V345H682l-4-3z"/>
          <path d="M945.500 81.500H1118V342l-3 3H947l-1.500-3z"/>
          <path d="M678 350.500H849l2 3V610.500H678z"/>
          <path d="M858.500 350.500H1119.500V521.500H858.500z"/>
          <path d="M858.500 529H1030V790H858.500z"/>
          <path d="M1034.500 529H1296V700.500H1034.500z"/>
          <path d="M1034.500 705.500H1204l3 3V968.500H1034.500z"/>
        </g>
        <path d="M683 343.500H858M862 343.500H938M948 343.500H1115" stroke="#888" fill="none"/>
        <path d="M1358.500 951v13l3-3 2 5 2-1-2-5h4z" fill="#111"/>
      </g>
    </svg>
  </section>

  <aside class="tray">
    <div class="tray-title"><h2>Default Tray</h2><button class="tray-close" aria-label="Close tray">×</button></div>
    <div class="tray-body">
      <section>
        <h3 class="panel-title"><span>Entity Info</span><button aria-label="Close Entity Info">×</button></h3>
        <div class="entity"><p>No Selection</p></div>
      </section>
      <section>
        <h3 class="panel-title"><span>Materials</span><button aria-label="Close Materials">×</button></h3>
        <div class="info">
          <svg class="thumb" viewBox="0 0 48 52"><path d="M0 0h48v52H0z" fill="#fff"/><path d="M0 1l48 49H0z" fill="#9cabb8"/></svg>
          <div class="fields"><input aria-label="Material name" value="Default" disabled></div>
          <div class="side"><svg class="s12"><use href="#pane"/></svg><svg class="s14"><use href="#block"/></svg><svg class="s16" viewBox="0 0 16 16"><path d="M0 0h16v16H0z" fill="#fff"/><path d="M0 0l16 16H0z" fill="#9cabb8"/></svg></div>
        </div>
        <div class="browse">
          <div class="tabs"><button class="active">Select</button><button>Edit</button><svg class="s14"><use href="#dropper"/></svg></div>
          <div class="nav"><button aria-label="Back"><svg class="s10"><use href="#prev"/></svg></button><button aria-label="Forward"><svg class="s10"><use href="#next"/></svg></button><button aria-label="In Model"><svg class="s14"><use href="#home"/></svg></button><span class="picker lined"><select aria-label="Material library"><option>Materials&lt;1&gt;</option></select></span><button aria-label="Details"><svg class="s10"><use href="#detail"/></svg></button></div>
        </div>
        <div class="list materials"></div>
      </section>
      <section>
        <h3 class="panel-title"><span>Components</span><button aria-label="Close Components">×</button></h3>
        <div class="info">
          <svg class="thumb"><use href="#cubes"/></svg>
          <div class="fields"><input aria-label="Component name" disabled><textarea aria-label="Component description" disabled></textarea></div>
          <div class="side"><svg class="s12"><use href="#pane"/></svg></div>
        </div>
        <div class="browse">
          <div class="tabs"><button class="active">Select</button><button>Edit</button><button class="wide">Statistics</button></div>
          <div class="nav"><button class="view" aria-label="View options"><svg class="s14" viewBox="0 0 14 14"><path d="M1 3h3v3H1zM6 3h3v3H6zM1 8h3v3H1zM6 8h3v3H6z" fill="none" stroke="#555"/><path d="M11 8h3l-1 2z"/></svg></button><button class="home" aria-label="In Model"><svg class="s14"><use href="#home"/></svg></button><button class="drop" aria-label="Navigation"></button><input class="search" aria-label="Search 3D Warehouse" placeholder="3D Warehouse"><button class="boxed" aria-label="Search"><svg class="s10"><use href="#lens"/></svg></button><button aria-label="Details"><svg class="s10"><use href="#detail"/></svg></button></div>
        </div>
        <ul class="list components">
          <li><svg><use href="#folder"/></svg><b>Components Sampler</b></li>
          <li><svg><use href="#folder"/></svg><b>Dynamic Components Training</b></li>
        </ul>
        <div class="pager"><button aria-label="Previous page"><svg class="s10"><use href="#prev"/></svg></button><span>Components</span><button aria-label="Next page"><svg class="s10"><use href="#next"/></svg></button></div>
      </section>
      <section>
        <h3 class="panel-title"><span>Styles</span><button aria-label="Close Styles">×</button></h3>
        <div class="info">
          <svg class="thumb blue" viewBox="0 0 48 52"><path d="M0 0h48v52H0z" fill="#fff"/><use href="#model" width="48" height="52"/><path d="M14 23q10-12 21-2M35 32q-10 8-20 1" fill="none" stroke="#666" stroke-width="4"/><path d="M30 22l7-7 1 9zM11 29l9 1-6 7z" fill="#666"/></svg>
          <div class="fields white"><input aria-label="Style name" value="Construction Documentation Sty"><textarea aria-label="Style description">Default face colors. Profile
Edges. White background.</textarea></div>
          <div class="side"><svg class="s12" viewBox="0 0 12 12"><path d="M2 1h8v6H2zM5 7h3v3h2l-4 2-4-2h3z" fill="#111"/><path d="M4 4h4" stroke="#fff"/></svg><svg class="s14"><use href="#block"/></svg><svg class="s12" viewBox="0 0 12 12"><path d="M1 5q2-5 8-2M2 11q-2-3 1-4" fill="none" stroke="#111" stroke-width="2"/><path d="M8 0l4 3-4 3z" fill="#111"/></svg></div>
        </div>
        <div class="browse">
          <div class="tabs"><button class="active">Select</button><button>Edit</button><button>Mix</button></div>
          <div class="nav"><button aria-label="Back"><svg class="s10"><use href="#prev"/></svg></button><button aria-label="Forward"><svg class="s10"><use href="#next"/></svg></button><button aria-label="In Model"><svg class="s14"><use href="#home"/></svg></button><span class="picker"><select aria-label="Style library"><option>Default Styles</option></select></span><button aria-label="Details"><svg class="s10"><use href="#detail"/></svg></button></div>
        </div>
        <div class="styles">
          <button class="sky red" aria-label="Style 1"><svg><use href="#model"/></svg></button><button class="gray" aria-label="Style 2"><svg><use href="#model"/></svg></button><button class="chosen" aria-label="Style 3"><svg><use href="#model"/></svg></button><button class="olive" aria-label="Style 4"><svg><use href="#model"/></svg></button><button class="sketch" aria-label="Style 5"><svg viewBox="0 0 38 38"><path d="M3 15L14 5l12-1-10 10zM3 15v14l12 4M15 15v18M26 4v12M20 17q6-3 13 0M20 17v13" fill="none" stroke="#999" stroke-dasharray="5 1"/><circle cx="28" cy="30" r="3.500" fill="#fff" stroke="#6a8a4a"/><path d="M28 25v5h3" fill="none" stroke="#6a8a4a"/></svg></button>
          <button aria-label="Style 6"><svg><use href="#model"/></svg></button><button class="gray" aria-label="Style 7"><svg><use href="#model"/></svg></button>
        </div>
      </section>
    </div>
  </aside>
</main>

<footer class="status"><span>Measurements</span></footer>

<button class="flyout" aria-label="Expand"><svg viewBox="0 0 16 50"><path d="M0 0h16v50L0 33z" fill="#f4f4f4" stroke="#d2d2d2"/><path d="M14 9l-7 6 7 6" fill="none" stroke="#2e8db8" stroke-width="4"/></svg></button>
<div class="toast" role="alert">
  <div class="toast-head"><svg class="s12"><use href="#cc"/></svg><span>Adobe Creative Cloud</span><button aria-label="More">···</button><button aria-label="Dismiss"><svg class="s10" viewBox="0 0 10 10"><path d="M2 2l7 7M9 2L2 9" stroke="#222"/></svg></button></div>
  <div class="toast-body"><span class="toast-icon"><svg><use href="#cc"/></svg></span><div><p class="toast-title">Creative Cloud</p><p>You have 2 app updates available</p></div></div>
</div>
<div class="tooltip" role="tooltip">Move notification to action center</div>
</body>
</html>
```
FILE: styles.css
```css
* { box-sizing: border-box; }
body {
  margin: 0;
  height: 100vh;
  display: flex;
  flex-direction: column;
  overflow: hidden;
  background: #f0f0f0;
  color: #111;
  font: 9px/12px Roboto, "Noto Sans", sans-serif;
}
button, input, textarea, select { font: inherit; color: inherit; }
button { display: inline-flex; align-items: center; justify-content: center; padding: 0; border: 0; background: none; }
h1, h2, h3, p, ul { margin: 0; padding: 0; font: inherit; }
svg { display: block; flex: none; }
.sprite { position: absolute; width: 0; height: 0; }
.s10 { width: 10px; height: 10px; }
.s12 { width: 12px; height: 12px; }
.s14 { width: 14px; height: 14px; }
.s16 { width: 16px; height: 16px; }

.titlebar { display: flex; align-items: center; gap: 5px; flex: none; height: 10px; background: #fff; color: #777; }
.app-dot { width: 9px; height: 9px; border-radius: 0 0 5px 5px; background: #2b71a0; }
.title { font: 9px/10px "Open Sans", "Noto Sans", sans-serif; white-space: nowrap; }
.window-buttons { display: flex; gap: 24px; margin-left: auto; padding-right: 11px; }
.window-buttons svg { width: 10px; height: 8px; }

.menubar { display: flex; gap: 11px; flex: none; height: 17px; padding: 3px 0 0 2px; background: #fff; color: #444; font: 9px/14px "Open Sans", "Noto Sans", sans-serif; }
.menubar { gap: 9px; }

.toolbars { display: flex; flex: none; height: 31px; border-bottom: 1px solid #666; box-shadow: inset 0 1px #e6e6e6; }
.toolbar { display: flex; align-items: center; flex: none; height: 29px; padding-left: 4px; border-right: 1px solid #c4c4c4; background: radial-gradient(circle, #aaa 1px, transparent 1px) 0 0 / 3px 3px repeat-y; }
.views { width: 162px; }
.solids { width: 169px; }
.camera { width: 240px; }
.sections { width: 111px; }
.tool { flex: 0 1 auto; width: 26px; height: 26px; min-width: 0; }
.tool svg { width: 18px; height: 18px; }
.sep { flex: none; width: 1px; height: 22px; margin: 0 2px; background: #999; }
.drop { width: 16px; height: 20px; flex: none; }
.drop::before { content: ""; border: 4px solid transparent; border-top: 5px solid #000; border-bottom: 0; }
.split { display: flex; align-items: center; width: 45px; height: 25px; border: 1px solid #a9d5f5; background: #cce6fa; }
.on { border: 1px solid #a9d5f5; background: #cce6fa; }

.workspace { display: flex; flex: 1; min-height: 0; }
.palette { width: 51px; flex: none; }
.tools { display: flex; flex-wrap: wrap; padding-top: 5px; border-bottom: 1px solid #aaa; background: radial-gradient(circle, #aaa 1px, transparent 1px) 0 0 / 3px 3px repeat-x; }
.tools .tool { flex: 0 0 24px; }
.tools .rule { width: 100%; height: 1px; margin: 2px 0; background: #999; }

.viewport { position: relative; flex: 1; min-width: 0; overflow: hidden; border-left: 2px solid #808080; background: #fff; }
.scene { width: 100%; height: 100%; }
.view-name { position: absolute; top: 0; left: 2px; font-weight: 500; }

.tray { display: flex; flex-direction: column; width: 207px; flex: none; overflow: hidden; border: solid #a9bfd6; border-width: 0 2px; }
.tray-title { display: flex; align-items: center; justify-content: space-between; flex: none; height: 19px; padding: 0 1px; background: #9cb5d0; }
.tray-title h2 { font-weight: 700; }
.tray-close { width: 10px; height: 10px; background: #c44c50; color: #fff; font-weight: 700; }
.tray-body { margin-right: 6px; }
.panel-title { display: flex; align-items: center; height: 13px; border: solid #b5b5b5; border-width: 1px 0; background: linear-gradient(#e4e4e4, #c9c9c9); font-size: 10px; }
.panel-title::before { content: ""; margin: 0 5px; border: 3px solid transparent; border-top: 5px solid #111; border-bottom: 0; }
.panel-title button { width: 10px; height: 10px; margin: 0 2px 0 auto; background: #fff; }
.entity { height: 137px; }
.entity p { height: 22px; padding: 5px; border-bottom: 1px solid #aaa; font-weight: 700; }
.info { display: flex; gap: 3px; height: 57px; padding: 2px 0 2px 1px; border-bottom: 1px solid #aaa; }
.thumb { width: 49px; height: 52px; border: 1px solid #aaa; }
.blue { color: #afc3d2; }
.fields { display: flex; flex-direction: column; gap: 1px; flex: 1; min-width: 0; font-size: 8px; }
.fields input { width: 100%; height: 15px; padding: 0 4px; border: 1px solid #c4c4c4; background: #f0f0f0; }
.fields textarea { width: 100%; flex: 1; padding: 2px 4px; border: 1px solid #c4c4c4; background: #f0f0f0; resize: none; overflow: hidden; line-height: 10px; }
.fields :disabled { color: #777; }
.white input, .white textarea { background: #fff; }
.side { display: flex; flex-direction: column; align-items: center; gap: 5px; width: 18px; }
.browse { height: 44px; padding-top: 6px; }
.tabs { display: flex; align-items: center; height: 16px; }
.tabs button { width: 28px; height: 14px; }
.tabs .active { width: 30px; height: 16px; padding-bottom: 2px; background: #fafafa; }
.tabs .wide { width: 56px; }
.tabs svg { margin: -6px 2px 0 auto; }
.nav { display: flex; align-items: center; height: 20px; padding-left: 4px; }
.nav > button { width: 18px; height: 16px; }
.nav .drop { width: 12px; }
.nav .view { width: 24px; }
.nav .boxed { border: 1px solid #aaa; background: #fff; width: 14px; }
.picker { display: flex; position: relative; flex: 1; height: 18px; border: 1px solid #999; background: #fff; }
.picker select { flex: 1; appearance: none; padding: 0 3px; border: 0; background: none; }
.picker::after { content: ""; position: absolute; right: 5px; top: 5px; width: 4px; height: 4px; border: solid #777; border-width: 0 1px 1px 0; transform: rotate(45deg); }
.lined::before { content: ""; position: absolute; left: 4px; right: 16px; bottom: 2px; height: 1px; background: #111; }
.search { flex: 1; min-width: 0; height: 16px; padding: 0 3px; border: 1px solid #999; background: #fff; }
.search::placeholder { color: #777; opacity: 1; }
.list { border-top: 1px solid #aaa; background: #fff; list-style: none; }
.materials { height: 147px; }
.components { display: grid; grid-auto-rows: 50px; gap: 6px; height: 138px; padding: 5px 0 0 5px; }
.components li { display: flex; gap: 3px; }
.components svg { width: 48px; height: 50px; }
.components b { font: bold 9px/14px "Liberation Sans", Arial, sans-serif; white-space: nowrap; }
.pager { display: flex; align-items: center; justify-content: space-between; height: 21px; padding: 0 3px 4px; border-top: 1px solid #aaa; color: #666; }
.styles { display: grid; grid-template-columns: repeat(5, 38px); gap: 1px; padding-left: 4px; color: #afc3d2; overflow: hidden; }
.styles button { height: 40px; border: 1px solid #bbb; background: #fff; color: inherit; overflow: hidden; }
.styles svg { width: 36px; height: 36px; }
.styles .sky { background: linear-gradient(#91bfd8, #eee 50%, #ddd); }
.styles .red { color: #ee1414; }
.styles .gray { background: #d9d9d9; }
.styles .olive { background: linear-gradient(#d8dfe0, #c8c5b4); }
.styles .chosen { border: 2px solid #1864a6; }

.status { display: flex; align-items: stretch; flex: none; height: 29px; border-top: 1px solid #ddd; background: radial-gradient(circle, #aaa 1px, transparent 1px) 0 0 / 3px 3px repeat-y; }
.status span { width: 221px; padding: 9px 8px; border-right: 1px solid #bbb; font-weight: 600; }

.flyout { position: fixed; right: 0; bottom: 175px; width: 16px; height: 50px; }
.flyout svg { width: 16px; height: 50px; }
.toast { position: fixed; right: 10px; bottom: 0; width: 273px; height: 82px; padding: 10px 10px 0 12px; overflow: hidden; background: #f2f2f2; box-shadow: 0 0 4px #bbb; color: #222; font-size: 11px; }
.toast-head { display: flex; align-items: center; gap: 6px; height: 20px; font-size: 10px; }
.toast-head button { width: 14px; }
.toast-head button:first-of-type { margin-left: auto; color: #777; }
.toast-body { display: flex; gap: 12px; padding-top: 7px; color: #666; line-height: 14px; }
.toast-icon { display: flex; align-items: center; justify-content: center; width: 45px; height: 46px; background: #1b5eaa; }
.toast-icon svg { width: 40px; height: 40px; }
.toast-title { padding-top: 4px; color: #222; }
.tooltip { position: fixed; right: 0; bottom: 82px; width: 150px; height: 21px; padding-left: 6px; background: #fff; box-shadow: 0 1px 3px #999; font: 9px/21px "Open Sans", "Noto Sans", sans-serif; white-space: nowrap; }
```
